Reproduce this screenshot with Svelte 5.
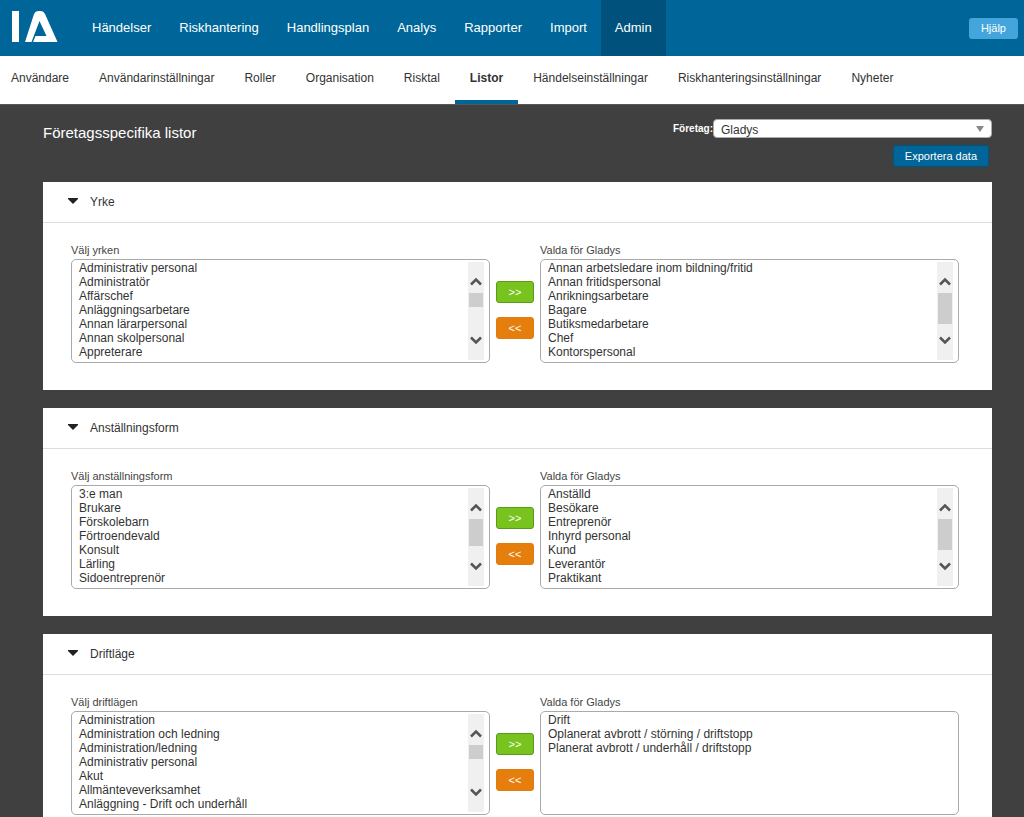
<script lang="ts">
	type List = { items: string[], thumb: number };
	type Panel = { id: string, title: string, label: string, available: List, chosen: List };

	const company = "Gladys";

	const mainNav = ["Händelser", "Riskhantering", "Handlingsplan", "Analys", "Rapporter", "Import", "Admin"];
	const subNav = ["Användare", "Användarinställningar", "Roller", "Organisation", "Risktal", "Listor",
		"Händelseinställningar", "Riskhanteringsinställningar", "Nyheter"];

	let activeMain = $state("Admin");
	let activeSub = $state("Listor");
	let closed: Record<string, boolean> = $state({});

	// thumb is the height of the scroll handle, 0 when the list does not scroll
	const panels: Panel[] = [
		{
			id: "yrke",
			title: "Yrke",
			label: "Välj yrken",
			available: {
				items: ["Administrativ personal", "Administratör", "Affärschef", "Anläggningsarbetare",
					"Annan lärarpersonal", "Annan skolpersonal", "Appreterare"],
				thumb: 14
			},
			chosen: {
				items: ["Annan arbetsledare inom bildning/fritid", "Annan fritidspersonal", "Anrikningsarbetare",
					"Bagare", "Butiksmedarbetare", "Chef", "Kontorspersonal"],
				thumb: 31
			}
		},
		{
			id: "anstallningsform",
			title: "Anställningsform",
			label: "Välj anställningsform",
			available: {
				items: ["3:e man", "Brukare", "Förskolebarn", "Förtroendevald", "Konsult", "Lärling",
					"Sidoentreprenör"],
				thumb: 27
			},
			chosen: {
				items: ["Anställd", "Besökare", "Entreprenör", "Inhyrd personal", "Kund", "Leverantör",
					"Praktikant"],
				thumb: 31
			}
		},
		{
			id: "driftlage",
			title: "Driftläge",
			label: "Välj driftlägen",
			available: {
				items: ["Administration", "Administration och ledning", "Administration/ledning",
					"Administrativ personal", "Akut", "Allmänteveverksamhet", "Anläggning - Drift och underhåll"],
				thumb: 14
			},
			chosen: {
				items: ["Drift", "Oplanerat avbrott / störning / driftstopp",
					"Planerat avbrott / underhåll / driftstopp"],
				thumb: 0
			}
		}
	];
</script>

{#snippet listBox(id: string, label: string, list: List)}
	<div class="list">
		<label for={id}>{label}</label>
		<div class="box">
			<select {id} multiple size="7">
				{#each list.items as item}
					<option>{item}</option>
				{/each}
			</select>
			{#if list.thumb}
				<div class="scrollbar" aria-hidden="true">
					<svg viewBox="0 0 12 9"><path d="M1 7.5 6 2.5 11 7.5"/></svg>
					<div class="track">
						<div class="thumb" style="height: {list.thumb}px"></div>
					</div>
					<svg viewBox="0 0 12 9"><path d="M1 1.5 6 6.5 11 1.5"/></svg>
				</div>
			{/if}
		</div>
	</div>
{/snippet}

<header>
	<a class="logo" href="#start" aria-label="IA">
		<svg viewBox="0 0 46 34">
			<path d="M0 0h7v31H0zM13 31 22 3Q23.500 0 26 0h3Q31.500 0 33 3L45.500 31H21L23.500 25H34.500L27.500 10 19.500 31z"/>
		</svg>
	</a>
	<nav class="main-nav">
		{#each mainNav as item}
			<a href="#{item}" class:active={item === activeMain} onclick={() => activeMain = item}>{item}</a>
		{/each}
	</nav>
	<button class="help">Hjälp</button>
</header>

<nav class="sub-nav">
	{#each subNav as item}
		<a href="#{item}" class:active={item === activeSub} onclick={() => activeSub = item}>{item}</a>
	{/each}
</nav>

<main>
	<div class="toolbar">
		<h1>Företagsspecifika listor</h1>
		<div class="tools">
			<div class="company">
				<label for="company">Företag:</label>
				<div class="dropdown">
					<select id="company">
						<option>{company}</option>
					</select>
					<svg viewBox="0 0 8 6" aria-hidden="true"><path d="M0 0h8L4 6z"/></svg>
				</div>
			</div>
			<button class="export">Exportera data</button>
		</div>
	</div>

	{#each panels as panel}
		<section>
			<h2>
				<button aria-expanded={!closed[panel.id]} onclick={() => closed[panel.id] = !closed[panel.id]}>
					<svg viewBox="0 0 10 6" aria-hidden="true"><path d="M0 0h10v1L5 6 0 1z"/></svg>
					{panel.title}
				</button>
			</h2>
			{#if !closed[panel.id]}
				<div class="lists">
					{@render listBox(panel.id + "-available", panel.label, panel.available)}
					<div class="move">
						<button class="add">&gt;&gt;</button>
						<button class="remove">&lt;&lt;</button>
					</div>
					{@render listBox(panel.id + "-chosen", "Valda för " + company, panel.chosen)}
				</div>
			{/if}
		</section>
	{/each}
</main>

<style>
	:global(body) {
		background: #404040;
		color: #333;
		font: 12px/14px "Liberation Sans", Arial, sans-serif;
	}

	button, select {
		font: inherit;
		color: inherit;
		box-sizing: border-box;
	}

	button {
		cursor: pointer;
	}

	a {
		color: inherit;
		text-decoration: none;
	}

	header {
		display: flex;
		align-items: center;
		height: 56px;
		padding: 0 6px 0 12px;
		background: #069;
		color: #fff;
	}

	.logo {
		width: 66px;
	}

	.logo svg {
		display: block;
		width: 46px;
		height: 34px;
		fill: #fff;
	}

	.main-nav {
		display: flex;
		flex: 1;
		font-size: 13px;
	}

	.main-nav a {
		padding: 0 14px;
		line-height: 56px;
	}

	.main-nav a.active {
		background: #00527d;
	}

	.help {
		height: 21px;
		padding: 0 12px;
		border: none;
		border-radius: 3px;
		background: #44a5dc;
		font-size: 11px;
	}

	.sub-nav {
		display: flex;
		background: #fff;
		border-bottom: 1px solid #555;
	}

	.sub-nav a {
		padding: 0 15px;
		line-height: 44px;
		border-bottom: 4px solid transparent;
	}

	.sub-nav a:first-child {
		padding-left: 11px;
	}

	.sub-nav a.active {
		font-weight: bold;
		border-bottom-color: #069;
	}

	main {
		padding: 0 32px 0 43px;
	}

	.toolbar {
		display: flex;
		justify-content: space-between;
		padding: 14px 0 15px;
		color: #fff;
	}

	h1 {
		margin: 4px 0 0;
		font-size: 15px;
		font-weight: normal;
		line-height: 20px;
	}

	.tools {
		display: flex;
		flex-direction: column;
		align-items: flex-end;
		gap: 7px;
	}

	.company {
		display: flex;
		align-items: center;
	}

	.company label {
		font-size: 10px;
		font-weight: bold;
	}

	.dropdown {
		position: relative;
		width: 279px;
	}

	.dropdown select {
		display: block;
		width: 100%;
		height: 19px;
		padding: 2px 7px 0;
		appearance: none;
		border: 1px solid #aaa;
		border-radius: 4px;
		background: #fff;
		color: #333;
	}

	.dropdown svg {
		position: absolute;
		top: 7px;
		right: 8px;
		width: 8px;
		height: 6px;
		fill: #888;
		pointer-events: none;
	}

	.export {
		height: 22px;
		margin-right: 3px;
		padding: 0 11px;
		border: 1px solid #005480;
		border-radius: 3px;
		background: #069;
		font-size: 11px;
	}

	section {
		margin-bottom: 18px;
		background: #fff;
	}

	h2 {
		margin: 0;
		border-bottom: 1px solid #ddd;
	}

	h2 button {
		display: flex;
		align-items: center;
		gap: 12px;
		width: 100%;
		height: 40px;
		padding: 0 25px;
		border: none;
		background: none;
		font-size: 12px;
		font-weight: normal;
	}

	h2 svg {
		width: 10px;
		height: 6px;
		margin-bottom: 2px;
		fill: #222;
	}

	.lists {
		display: grid;
		grid-template-columns: 1fr 38px 1fr;
		gap: 6px;
		padding: 20px 33px 27px 28px;
	}

	.list label {
		display: block;
		margin-bottom: 2px;
		color: #444;
		font-size: 11px;
	}

	.box {
		position: relative;
	}

	.box select {
		display: block;
		width: 100%;
		height: 104px;
		padding: 1px 2px;
		border: 1px solid #aaa;
		border-radius: 5px;
		background: #fff;
		scrollbar-width: none;
	}

	.box option {
		min-height: 14px;
		padding: 0 5px;
		line-height: 14px;
	}

	.scrollbar {
		position: absolute;
		top: 3px;
		right: 6px;
		bottom: 3px;
		display: flex;
		flex-direction: column;
		align-items: center;
		box-sizing: border-box;
		width: 16px;
		padding: 15px 0;
		background: #f0f0f0;
		pointer-events: none;
	}

	.scrollbar svg {
		width: 12px;
		height: 9px;
		fill: none;
		stroke: #555;
		stroke-width: 2.500;
	}

	.track {
		flex: 1;
		align-self: stretch;
		padding: 7px 1px 0;
	}

	.thumb {
		background: #cdcdcd;
	}

	.move {
		display: flex;
		flex-direction: column;
		gap: 14px;
		padding-top: 38px;
	}

	.move button {
		height: 22px;
		padding: 0;
		border: 1px solid #5a9a1c;
		border-radius: 3px;
		background: #78c31e;
		color: #fff;
		font-size: 11px;
	}

	.move .remove {
		border-color: #e17d0f;
		background: #e67e0e;
	}
</style>
